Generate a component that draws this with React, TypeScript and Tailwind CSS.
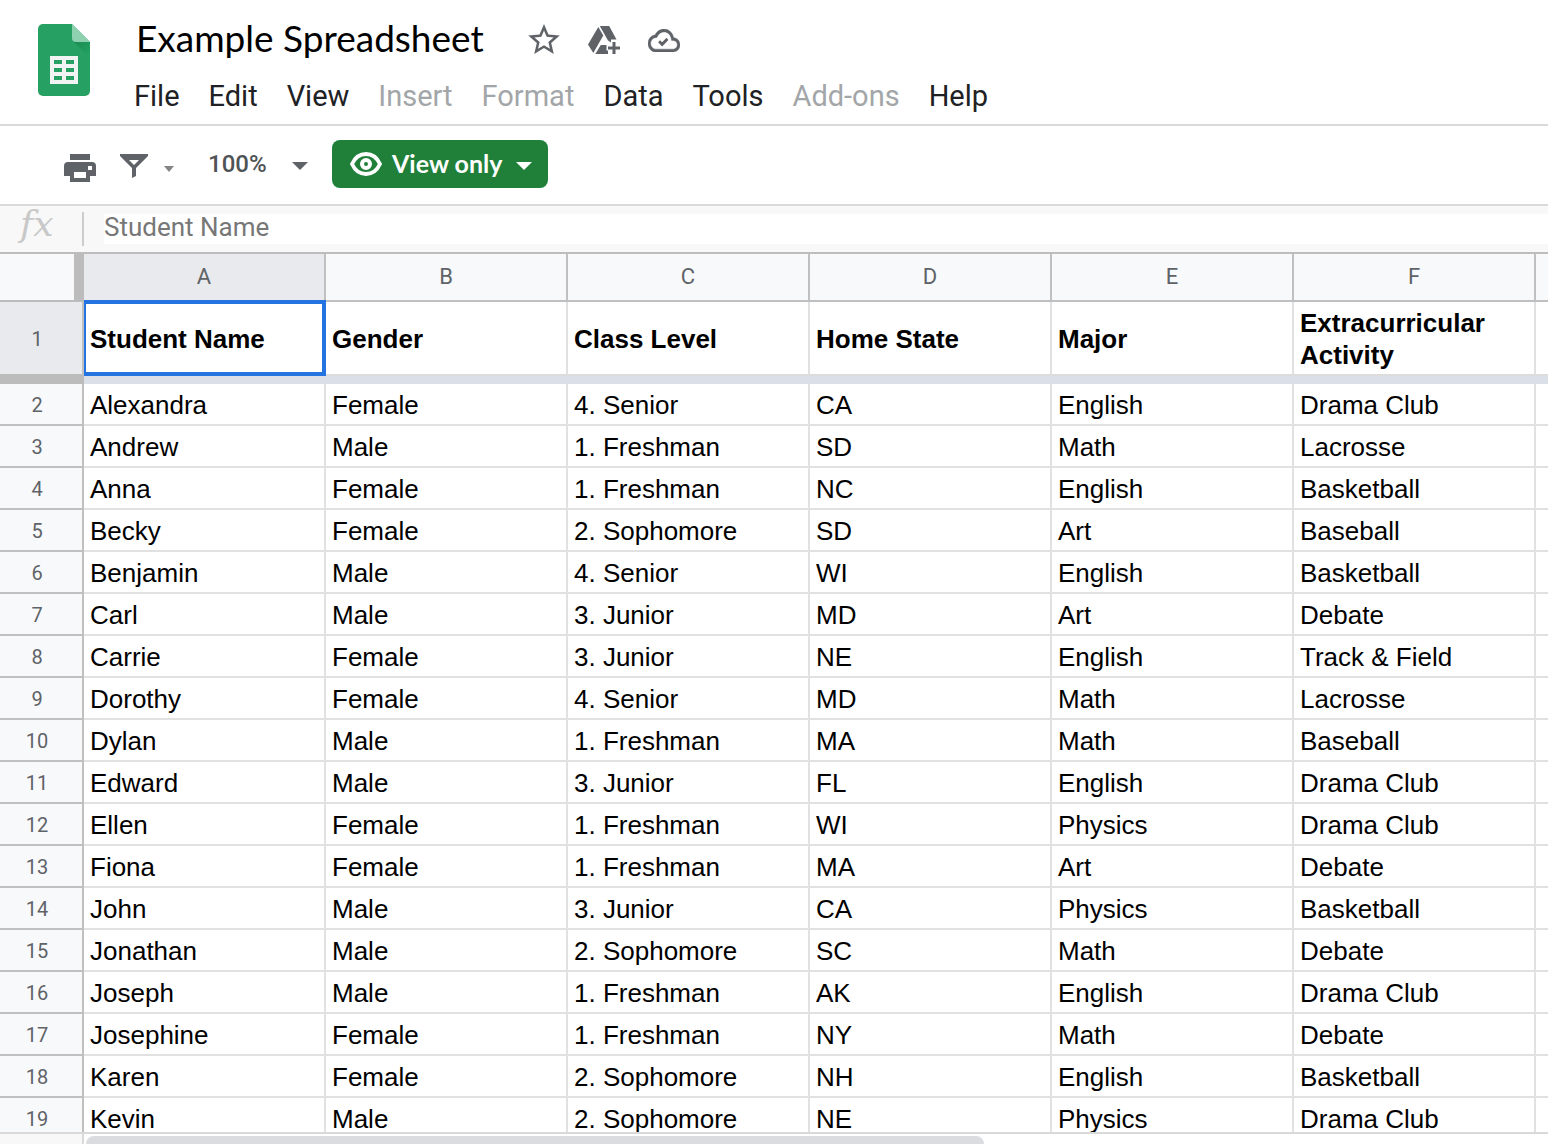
import React from "react";

const menuItems = [
  { label: "File" },
  { label: "Edit" },
  { label: "View" },
  { label: "Insert", disabled: true },
  { label: "Format", disabled: true },
  { label: "Data" },
  { label: "Tools" },
  { label: "Add-ons", disabled: true },
  { label: "Help" },
];

const columns = ["A", "B", "C", "D", "E", "F"];

const headings = [
  "Student Name",
  "Gender",
  "Class Level",
  "Home State",
  "Major",
  "Extracurricular Activity",
];

const students = [
  ["Alexandra", "Female", "4. Senior", "CA", "English", "Drama Club"],
  ["Andrew", "Male", "1. Freshman", "SD", "Math", "Lacrosse"],
  ["Anna", "Female", "1. Freshman", "NC", "English", "Basketball"],
  ["Becky", "Female", "2. Sophomore", "SD", "Art", "Baseball"],
  ["Benjamin", "Male", "4. Senior", "WI", "English", "Basketball"],
  ["Carl", "Male", "3. Junior", "MD", "Art", "Debate"],
  ["Carrie", "Female", "3. Junior", "NE", "English", "Track & Field"],
  ["Dorothy", "Female", "4. Senior", "MD", "Math", "Lacrosse"],
  ["Dylan", "Male", "1. Freshman", "MA", "Math", "Baseball"],
  ["Edward", "Male", "3. Junior", "FL", "English", "Drama Club"],
  ["Ellen", "Female", "1. Freshman", "WI", "Physics", "Drama Club"],
  ["Fiona", "Female", "1. Freshman", "MA", "Art", "Debate"],
  ["John", "Male", "3. Junior", "CA", "Physics", "Basketball"],
  ["Jonathan", "Male", "2. Sophomore", "SC", "Math", "Debate"],
  ["Joseph", "Male", "1. Freshman", "AK", "English", "Drama Club"],
  ["Josephine", "Female", "1. Freshman", "NY", "Math", "Debate"],
  ["Karen", "Female", "2. Sophomore", "NH", "English", "Basketball"],
  ["Kevin", "Male", "2. Sophomore", "NE", "Physics", "Drama Club"],
];

function SheetsLogo() {
  return (
    <svg width="52" height="72" viewBox="0 0 52 72" aria-hidden="true">
      <defs>
        <linearGradient id="fold" x1="0" y1="0" x2="1" y2="1">
          <stop offset="0" stopColor="#1b8a50" />
          <stop offset="1" stopColor="#23a566" />
        </linearGradient>
      </defs>
      <path d="M5 0H34L52 18V67a5 5 0 0 1-5 5H5a5 5 0 0 1-5-5V5a5 5 0 0 1 5-5Z" fill="#27a163" />
      <path d="M35 17L52 34V18Z" fill="url(#fold)" />
      <path d="M34 0L52 18H38a4 4 0 0 1-4-4Z" fill="#8ed1b1" />
      <path
        fillRule="evenodd"
        fill="#f1f3f2"
        d="M12 32H40V60H12ZM16 36V40H24V36ZM28 36V40H36V36ZM16 44V48H24V44ZM28 44V48H36V44ZM16 52V56H24V52ZM28 52V56H36V52Z"
      />
    </svg>
  );
}

function StarIcon() {
  return (
    <svg width="32" height="30" viewBox="2 2 20 19" fill="currentColor" aria-hidden="true">
      <path d="M22 9.24l-7.19-.62L12 2 9.19 8.63 2 9.24l5.46 4.73L5.82 21 12 17.27 18.18 21l-1.63-7.03L22 9.24zM12 15.4l-3.76 2.27 1-4.28-3.32-2.88 4.38-.38L12 6.1l1.71 4.04 4.38.38-3.32 2.88 1 4.28L12 15.4z" />
    </svg>
  );
}

function DriveIcon() {
  return (
    <svg width="32" height="28" viewBox="0 0 32 28" fill="currentColor" aria-hidden="true">
      <path d="M10.3 1L15.3 9.5L5.3 27L0 18.5Z" />
      <path d="M11.8 0H21.2L28.5 13.5H23V16.5L20 14.5Z" />
      <path d="M7.3 28L12.8 19H18.5V24.5H20V28Z" />
      <path d="M24.5 16H27.5V20.5H32V23.5H27.5V28H24.5V23.5H20V20.5H24.5Z" />
    </svg>
  );
}

function CloudIcon() {
  return (
    <svg width="32" height="23" viewBox="0 4 24 16" preserveAspectRatio="none" fill="currentColor" aria-hidden="true">
      <path
        d="M19.35 10.04A7.49 7.49 0 0 0 12 4C9.11 4 6.6 5.64 5.35 8.04A5.994 5.994 0 0 0 0 14c0 3.31 2.69 6 6 6h13c2.76 0 5-2.24 5-5 0-2.64-2.05-4.78-4.65-4.96zM19 18H6c-2.21 0-4-1.79-4-4 0-2.05 1.53-3.76 3.56-3.97l1.07-.11.5-.95C8.08 7.14 9.94 6 12 6c2.62 0 4.88 1.86 5.39 4.43l.3 1.5 1.53.11c1.56.1 2.78 1.41 2.78 2.96 0 1.65-1.35 3-3 3z"
        stroke="currentColor"
        strokeWidth="0.3"
      />
      <path d="M8.3 12.5L10.6 14.7L14.6 10.9" fill="none" stroke="currentColor" strokeWidth="2.1" />
    </svg>
  );
}

function PrintIcon() {
  return (
    <svg width="32" height="28" viewBox="0 0 32 28" fill="currentColor" aria-hidden="true">
      <path d="M6 0H26V6H6Z" />
      <path
        fillRule="evenodd"
        d="M4 8H28a4 4 0 0 1 4 4V22H26V28H6V22H0V12a4 4 0 0 1 4-4ZM24 12V16H28V12ZM10 18V24H22V18Z"
      />
    </svg>
  );
}

function FilterIcon() {
  return (
    <svg width="28" height="24" viewBox="0 0 28 24" fill="currentColor" aria-hidden="true">
      <path fillRule="evenodd" d="M0 0H28V2L16 14V22L12 24V14L0 2ZM9 6L14 11L19 6Z" />
    </svg>
  );
}

function EyeIcon() {
  return (
    <svg width="32" height="24" viewBox="0 0 32 24" fill="none" aria-hidden="true">
      <path
        d="M2 12C5 5.5 10 2 16 2S27 5.5 30 12C27 18.5 22 22 16 22S5 18.5 2 12Z"
        stroke="currentColor"
        strokeWidth="3.8"
      />
      <circle cx="16" cy="12" r="4" stroke="currentColor" strokeWidth="4" />
    </svg>
  );
}

function Caret() {
  return (
    <svg width="16" height="8" viewBox="0 0 16 8" fill="currentColor" aria-hidden="true">
      <path d="M0 0H16L8 8Z" />
    </svg>
  );
}

export default function App() {
  return (
    <div className="flex h-screen min-h-[480px] flex-col overflow-hidden bg-white">
      <header className="flex shrink-0 border-b-2 border-[#dadada] pt-3 pl-[38px] font-[Roboto,sans-serif]">
        <a href="#home" aria-label="Sheets home" className="mt-3">
          <SheetsLogo />
        </a>
        <div className="ml-11">
          <div className="flex h-14 items-center gap-7 pl-0.5 text-[#5f6368]">
            <h1 className="w-[364px] pb-1 font-[Lato,sans-serif] text-[37px] whitespace-nowrap text-black">
              Example Spreadsheet
            </h1>
            <button type="button" aria-label="Star" className="pb-0.5">
              <StarIcon />
            </button>
            <button type="button" aria-label="Add to Drive">
              <DriveIcon />
            </button>
            <button type="button" aria-label="Saved">
              <CloudIcon />
            </button>
          </div>
          <nav className="flex h-14 items-center gap-[29px] pt-0.5 text-[29px] whitespace-nowrap text-[#202124]">
            {menuItems.map((m) => (
              <button key={m.label} type="button" disabled={m.disabled} className="disabled:text-[#a3a6a9]">
                {m.label}
              </button>
            ))}
          </nav>
        </div>
      </header>

      <div className="flex h-20 shrink-0 items-center border-b-2 border-[#dadada] pt-0.5 pl-16 text-[#5f6368]">
        <button type="button" aria-label="Print" className="mt-1">
          <PrintIcon />
        </button>
        <button type="button" aria-label="Filter" className="ml-6 flex items-center gap-4">
          <FilterIcon />
          <svg width="10" height="6" viewBox="0 0 10 6" className="mt-1.5 text-[#858585]" fill="currentColor" aria-hidden="true">
            <path d="M0 0H10L5 6Z" />
          </svg>
        </button>
        <button
          type="button"
          aria-label="Zoom"
          className="ml-[34px] flex w-[100px] items-center justify-between font-[Roboto,sans-serif] text-[24px] font-medium"
        >
          <span className="pb-1 text-[#505356]">100%</span>
          <Caret />
        </button>
        <button
          type="button"
          className="-mt-1 ml-6 flex h-12 w-[216px] items-center rounded-lg bg-[#20803a] pl-[18px] text-white"
        >
          <EyeIcon />
          <span className="ml-2.5 w-[124px] text-left font-[Lato,sans-serif] text-[25px] font-bold whitespace-nowrap">
            View only
          </span>
          <span className="pt-1">
            <Caret />
          </span>
        </button>
      </div>

      <div className="flex h-12 shrink-0 border-b-2 border-[#bdbdbd] bg-[#f8f8f8]">
        <label
          htmlFor="formula"
          className="w-[82px] pl-5 font-['DejaVu_Serif',serif] text-[36px] leading-9 text-[#c8c8c8] italic"
        >
          fx
        </label>
        <div className="mt-1.5 h-[34px] w-0.5 bg-[#cccccc]" />
        <input
          id="formula"
          readOnly
          value="Student Name"
          className="mt-2 ml-5 h-[30px] min-w-0 flex-1 bg-white pb-1 font-[Roboto,sans-serif] text-[26px] text-[#777777] outline-none"
        />
      </div>

      <div className="min-h-0 flex-1 overflow-hidden font-['Liberation_Sans',sans-serif]">
        <table className="w-full min-w-[1548px] table-fixed border-separate border-spacing-0 text-left text-[26px] leading-8 text-black">
          <colgroup>
            <col className="w-[84px]" />
            {columns.map((c) => (
              <col key={c} className="w-[242px]" />
            ))}
            <col />
          </colgroup>
          <thead>
            <tr className="h-12 font-[Roboto,sans-serif] text-[22px] text-[#5f6368]">
              <td className="border-r-[10px] border-b-2 border-[#bcbcbc] bg-[#f8f9fb] p-0" />
              {columns.map((c) => (
                <th
                  key={c}
                  scope="col"
                  className="border-r-2 border-b-2 border-[#c0c0c0] bg-[#f8f9fb] p-0 text-center font-normal first-of-type:bg-[#e8eaed]"
                >
                  {c}
                </th>
              ))}
              <td className="border-b-2 border-[#c0c0c0] bg-[#f8f9fb] p-0" />
            </tr>
          </thead>
          <tbody>
            <tr className="h-[74px]">
              <th
                scope="row"
                className="border-r-2 border-b-2 border-r-[#c0c0c0] border-b-[#bcbcbc] bg-[#e8eaed] p-0 pt-0.5 pr-2 text-center font-[Roboto,sans-serif] text-[20px] font-normal text-[#5f6368]"
              >
                1
              </th>
              {headings.map((h, i) => (
                <td
                  key={h}
                  className="relative border-r-2 border-b-2 border-r-[#e1e1e1] border-b-[#dcdcdc] p-0 pt-0.5 pl-1.5 font-bold"
                >
                  {h}
                  {i === 0 && (
                    <span className="absolute -top-0.5 -right-0.5 -bottom-0.5 left-0 border-4 border-l-2 border-[#2374e1]" />
                  )}
                </td>
              ))}
              <td className="border-b-2 border-[#dcdcdc]" />
            </tr>
            <tr className="h-2">
              <td className="bg-[#bcbcbc] p-0" />
              <td colSpan={7} className="bg-[#dadfe8] p-0" />
            </tr>
            {students.map((row, r) => (
              <tr key={row[0]} className="h-[42px]">
                <th
                  scope="row"
                  className="border-r-2 border-b-2 border-[#c0c0c0] bg-[#f8f9fb] p-0 pt-0.5 pr-2 text-center font-[Roboto,sans-serif] text-[20px] font-normal text-[#5f6368]"
                >
                  {r + 2}
                </th>
                {row.map((cell, c) => (
                  <td key={c} className="border-r-2 border-b-2 border-[#e1e1e1] p-0 pt-0.5 pl-1.5">
                    {cell}
                  </td>
                ))}
                <td className="border-b-2 border-[#e1e1e1] p-0" />
              </tr>
            ))}
          </tbody>
        </table>
      </div>

      <div className="flex h-3 shrink-0 overflow-hidden border-t-2 border-[#d9d9d9]">
        <div className="w-[84px] border-r-2 border-[#d9d9d9] bg-[#f8f8f8]" />
        <div className="mt-0.5 ml-0.5 h-4 w-[898px] rounded-full bg-[#dadce0]" />
      </div>
    </div>
  );
}
